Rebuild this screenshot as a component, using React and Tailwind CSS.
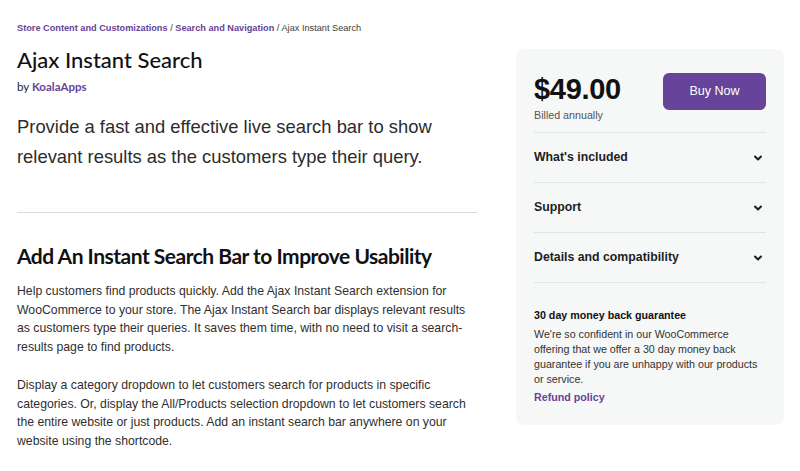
import React from 'react';
import { ChevronDown } from 'lucide-react';

const body = { fontFamily: '"Liberation Sans", Arial, sans-serif' };

const Row = ({ label }) => (
  <button className="w-full h-[50px] flex items-center justify-between border-b border-[#e2e4e7] text-[12.3px] font-bold text-[#1e1e1e]">
    <span>{label}</span>
    <ChevronDown className="w-3 h-3 mr-[2px] text-[#1e1e1e]" strokeWidth={4} />
  </button>
);

export default function App() {
  return (
    <div className="w-[800px] h-[471px] overflow-hidden bg-white text-[#1e1e1e] font-['Liberation_Sans',Arial,sans-serif]">
      <div className="flex pl-[17px] pr-4 pt-[22px] gap-[39px]">
        <main className="w-[460px] shrink-0">
          <nav className="text-[9.2px] leading-[13px] text-[#3c3c3c]">
            <a className="font-bold text-[#674399]">Store Content and Customizations</a>
            <span> / </span>
            <a className="font-bold text-[#674399]">Search and Navigation</a>
            <span> / Ajax Instant Search</span>
          </nav>
          <h1 className="mt-[11px] text-[22px] leading-[28px] font-medium font-['Lato',sans-serif] text-[#111]">
            Ajax Instant Search
          </h1>
          <p className="mt-[5px] text-[11.5px] leading-[16px] font-['Lato',sans-serif]">
            by <a className="font-bold text-[#674399]">KoalaApps</a>
          </p>
          <p className="mt-[17px] text-[18.4px] leading-[30px] text-[#2c2c2c] w-[440px]">
            Provide a fast and effective live search bar to show relevant results as the customers type their query.
          </p>
          <hr className="mt-[40px] border-t border-[#dcdcde]" />
          <h2 className="mt-[29px] text-[21px] leading-[28px] font-bold tracking-[-0.5px] font-['Lato',sans-serif] text-[#111]">
            Add An Instant Search Bar to Improve Usability
          </h2>
          <div className="mt-[12px] text-[12.25px] leading-[18.5px] text-[#2f2f2f]">
            <p>
              Help customers find products quickly. Add the Ajax Instant Search extension for WooCommerce to your store. The Ajax Instant Search bar displays relevant results as customers type their queries. It saves them time, with no need to visit a search-results page to find products.
            </p>
            <p className="mt-[20px]">
              Display a category dropdown to let customers search for products in specific categories. Or, display the All/Products selection dropdown to let customers search the entire website or just products. Add an instant search bar anywhere on your website using the shortcode.
            </p>
          </div>
        </main>
        <aside className="w-[268px] mt-[27px] shrink-0 self-start rounded-lg bg-[#f6f7f7] px-[18px] pb-[20px]" style={body}>
          <div className="flex items-start justify-between pt-[25px] pb-[10px] border-b border-[#e2e4e7]">
            <div>
              <div className="text-[29px] leading-[30px] font-bold text-[#111] tracking-[-0.3px]">$49.00</div>
              <div className="mt-[4px] text-[10.7px] leading-[14px] text-[#555]">Billed annually</div>
            </div>
            <button className="mt-[-1px] w-[103px] h-[37px] rounded-md bg-[#674399] text-white text-[12.5px]">
              Buy Now
            </button>
          </div>
          <Row label="What's included" />
          <Row label="Support" />
          <Row label="Details and compatibility" />
          <div className="pt-[25px]">
            <div className="text-[10.7px] leading-[15px] font-bold text-[#111]">30 day money back guarantee</div>
            <p className="mt-[4px] text-[10.7px] leading-[15px] text-[#333]">
              We're so confident in our WooCommerce offering that we offer a 30 day money back guarantee if you are unhappy with our products or service.
            </p>
            <a className="block mt-[3px] text-[10.7px] leading-[15px] font-bold text-[#674399]">Refund policy</a>
          </div>
        </aside>
      </div>
    </div>
  );
}
